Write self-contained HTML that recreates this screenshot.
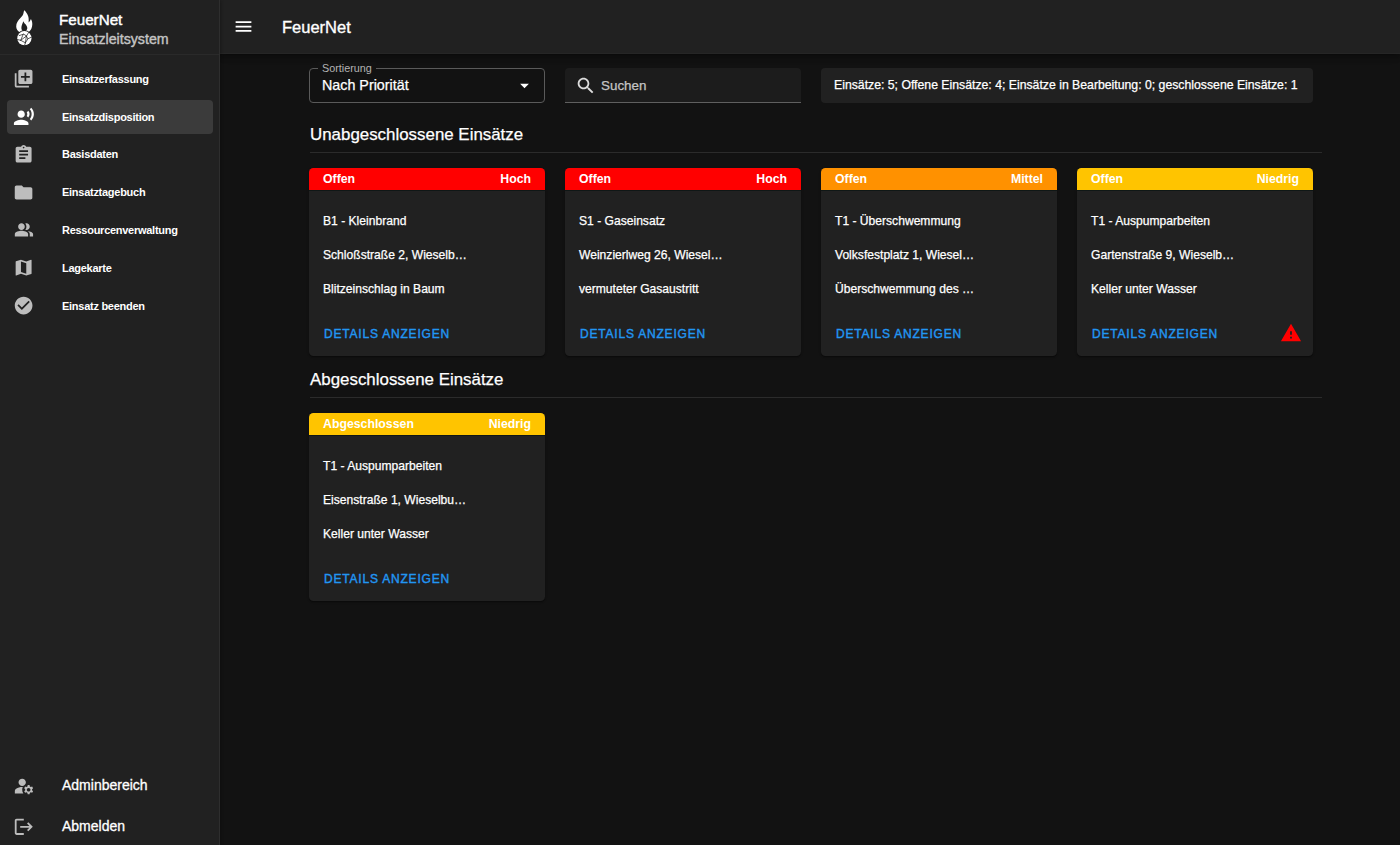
<!DOCTYPE html>
<html><head><meta charset="utf-8">
<style>
*{box-sizing:border-box;margin:0;padding:0}
html,body{width:1400px;height:845px;overflow:hidden;background:#121212;font-family:"Liberation Sans",sans-serif;color:#fff}
.abs{position:absolute}
#side{position:absolute;left:0;top:0;width:220px;height:845px;background:#212121;border-right:1px solid #2e2e2e;box-shadow:1px 0 3px rgba(0,0,0,.25);z-index:2}
#sidehead{position:absolute;left:0;top:0;width:219px;height:55px;border-bottom:1px solid #2a2a2a}
.brand1{position:absolute;left:59px;top:11px;font-size:15.2px;font-weight:400;-webkit-text-stroke:0.45px #fff;white-space:nowrap}
.brand2{position:absolute;left:59px;top:31px;font-size:14.2px;color:#c4c4c4;-webkit-text-stroke:0.4px #c4c4c4;white-space:nowrap}
.nav{position:absolute;left:7px;width:206px;height:34px;border-radius:4px}
.nav.sel{background:#3b3b3b}
.nav svg{position:absolute;left:6px;top:6px;width:22px;height:22px;fill:#bdbdbd}
.nav.sel svg{fill:#fff}
.nav span{position:absolute;left:55px;top:10.7px;font-size:11px;font-weight:700;letter-spacing:-0.27px;white-space:nowrap}
.nav.nav2 span{position:absolute;left:55px;font-size:14px;font-weight:400;letter-spacing:0;-webkit-text-stroke:0.3px #fff;white-space:nowrap}
#appbar{position:absolute;left:220px;top:0;width:1180px;height:54px;background:#212121;box-shadow:inset 0 -1px 0 #262626,0 2px 4px -1px rgba(0,0,0,.2),0 4px 5px 0 rgba(0,0,0,.14),0 1px 10px 0 rgba(0,0,0,.12)}
.title{position:absolute;left:62px;top:17.7px;font-size:16.5px;-webkit-text-stroke:0.35px #fff;white-space:nowrap}
.select{position:absolute;left:309px;top:68px;width:236px;height:34.5px;border:1px solid #5a5a5a;border-radius:4px}
.select .lbl{position:absolute;left:8px;top:-7px;padding:0 4px;background:#121212;font-size:10.8px;color:#b3b3b3;white-space:nowrap}
.select .val{position:absolute;left:12px;top:8.1px;font-size:14.3px;white-space:nowrap}
.search{position:absolute;left:565px;top:68px;width:236px;height:35px;background:#1c1c1c;border-radius:4px 4px 0 0;border-bottom:1px solid #5f5f5f}
.search .ph{position:absolute;left:36px;top:10px;font-size:13.4px;color:#c4c4c4;white-space:nowrap}
.stats{position:absolute;left:821px;top:68px;width:492px;height:34.5px;background:#212121;border-radius:4px}
.stats span{position:absolute;left:13px;top:10.3px;font-size:12.25px;white-space:nowrap}
.h{position:absolute;left:310px;font-size:16.9px;white-space:nowrap}
.div{position:absolute;left:310px;width:1012px;height:1px;background:#2b2b2b}
.card{position:absolute;width:236px;height:188px;background:#212121;border-radius:4.5px;overflow:hidden;box-shadow:0 2px 1px -1px rgba(0,0,0,.2),0 1px 1px 0 rgba(0,0,0,.14),0 1px 3px 0 rgba(0,0,0,.12)}
.card .hd{position:absolute;left:0;top:0;width:236px;height:23px;border-bottom:1px solid #0f1716}
.card .hd b{position:absolute;top:4px;font-size:12.3px;font-weight:700;white-space:nowrap}
.card .hd b.l{left:14px}
.card .hd b.r{right:14px}
.card .t{position:absolute;left:14px;font-size:12.1px;white-space:nowrap}
.card .btn{position:absolute;left:15px;top:159px;font-size:12px;font-weight:400;-webkit-text-stroke:0.4px #2196f3;letter-spacing:0.8px;color:#2196f3;white-space:nowrap}
.red{background:#ff0000}.orange{background:#ff9100}.yellow{background:#ffc400}
.th{-webkit-text-stroke:0.25px currentColor}
</style></head><body>
<div id="side">
  <div id="sidehead">
    <svg class="abs" style="left:10px;top:6px;width:30px;height:42px" viewBox="0 0 30 42">
<path fill="#fff" fill-rule="evenodd" d="M14.36 4.37C15.2 5.2 17.2 7.4 18.1 10C18.7 11.8 18.8 13.6 18.6 16.6C19.6 15.4 20.4 14.2 20.9 12.9C21.9 14.3 22.4 16.4 22.3 18.6C22.2 21.8 21 24.6 18.2 26.6L10.6 26.6C7.6 25.2 6.2 23 6.2 20.4C6.2 17 8 14.4 10.2 12.2C12.2 10.2 13.4 8.6 13.6 6.4C13.7 5.6 14 4.8 14.36 4.37ZM13.47 15.3C12.8 17 11.4 19.2 11.4 21.8C11.4 23.2 11.8 24.2 12.6 24.9L15.8 24.9C16.8 24.3 17.3 23.2 17.3 22.1C17.3 20.2 15.8 18.6 14.65 17.6C14.2 16.9 13.8 16 13.47 15.3Z"/>
<circle cx="14.4" cy="32.2" r="8" fill="#212121"/>
<circle cx="14.4" cy="32.2" r="7.1" fill="#fff"/>
<g stroke="#262626" stroke-width="0.75" fill="none" stroke-linejoin="round" stroke-linecap="round">
<path d="M13.2 28.3L10.7 34.3L15.4 36.8L17.9 32.8L16.4 30.1ZM16.4 30.1L15.4 36.8M10.7 34.3L16.4 30.1M13.2 28.3L9.2 29.6M17.9 32.8L21.3 31.2M15.4 36.8L14.6 39.3M10.7 34.3L7.6 33.6M16.4 30.1L18.6 26.6"/>
</g>
</svg>
    <div class="brand1">FeuerNet</div>
    <div class="brand2">Einsatzleitsystem</div>
  </div>
  <div class="nav" style="top:62px"><span style="top:10.70px">Einsatzerfassung</span></div>
  <div class="nav sel" style="top:100px"><span style="top:10.53px">Einsatzdisposition</span></div>
  <div class="nav" style="top:138px"><span style="top:10.36px">Basisdaten</span></div>
  <div class="nav" style="top:176px"><span style="top:10.19px">Einsatztagebuch</span></div>
  <div class="nav" style="top:214px"><span style="top:10.02px">Ressourcenverwaltung</span></div>
  <div class="nav" style="top:252px"><span style="top:9.85px">Lagekarte</span></div>
  <div class="nav" style="top:290px"><span style="top:9.68px">Einsatz beenden</span></div>
  <svg class="abs" style="left:13.38px;top:68.48px;width:21.24px;height:21.24px" viewBox="0 0 24 24" fill="#bdbdbd"><path d="M4 6H2v14c0 1.1.9 2 2 2h14v-2H4V6zm16-4H8c-1.1 0-2 .9-2 2v12c0 1.1.9 2 2 2h12c1.1 0 2-.9 2-2V4c0-1.1-.9-2-2-2zm-1 9h-4v4h-2v-4H9V9h4V5h2v4h4v2z"/></svg>
  <svg class="abs" style="left:13.08px;top:105.88px;width:21.84px;height:21.84px" viewBox="0 0 24 24" fill="#fff"><path d="M9 13c2.21 0 4-1.79 4-4s-1.79-4-4-4-4 1.79-4 4 1.79 4 4 4zm0 2c-2.67 0-8 1.34-8 4v2h16v-2c0-2.66-5.33-4-8-4zm7.76-9.64l-1.68 1.69c.84 1.18.84 2.71 0 3.89l1.68 1.69c2.02-2.02 2.02-5.07 0-7.27zM20.07 2l-1.63 1.63c2.77 3.02 2.77 7.56 0 10.74L20.07 16c3.9-3.89 3.91-9.95 0-14z"/></svg>
  <svg class="abs" style="left:13.38px;top:143.98px;width:21.24px;height:21.24px" viewBox="0 0 24 24" fill="#bdbdbd"><path d="M19 3h-4.18C14.4 1.84 13.3 1 12 1c-1.3 0-2.4.84-2.82 2H5c-1.1 0-2 .9-2 2v14c0 1.1.9 2 2 2h14c1.1 0 2-.9 2-2V5c0-1.1-.9-2-2-2zm-7 0c.55 0 1 .45 1 1s-.45 1-1 1-1-.45-1-1 .45-1 1-1zm2 14H7v-2h7v2zm3-4H7v-2h10v2zm0-4H7V7h10v2z"/></svg>
  <svg class="abs" style="left:13.44px;top:181.74px;width:21.12px;height:21.12px" viewBox="0 0 24 24" fill="#bdbdbd"><path d="M10 4H4c-1.1 0-1.99.9-1.99 2L2 18c0 1.1.9 2 2 2h16c1.1 0 2-.9 2-2V8c0-1.1-.9-2-2-2h-8l-2-2z"/></svg>
  <svg class="abs" style="left:14.04px;top:220.14px;width:19.92px;height:19.92px" viewBox="0 0 24 24" fill="#bdbdbd"><path d="M16.67 13.13C18.04 14.06 19 15.32 19 17v3h4v-3c0-2.18-3.57-3.47-6.33-3.87zM15 12c2.21 0 4-1.79 4-4s-1.79-4-4-4c-.47 0-.91.1-1.33.24C14.5 5.27 15 6.58 15 8s-.5 2.73-1.33 3.76c.42.14.86.24 1.33.24zM9 12c2.21 0 4-1.79 4-4s-1.79-4-4-4-4 1.79-4 4 1.79 4 4 4zM9 13c-2.67 0-8 1.34-8 4v3h16v-3c0-2.66-5.33-4-8-4z"/></svg>
  <svg class="abs" style="left:13.38px;top:257.28px;width:21.24px;height:21.24px" viewBox="0 0 24 24" fill="#bdbdbd"><path d="M20.5 3l-.16.03L15 5.1 9 3 3.36 4.9c-.21.07-.36.25-.36.48V20.5c0 .28.22.5.5.5l.16-.03L9 18.9l6 2.1 5.64-1.9c.21-.07.36-.25.36-.48V3.5c0-.28-.22-.5-.5-.5zM15 19l-6-2.11V5l6 2.11V19z"/></svg>
  <svg class="abs" style="left:13.38px;top:295.18px;width:21.24px;height:21.24px" viewBox="0 0 24 24" fill="#bdbdbd"><path d="M12 2C6.48 2 2 6.48 2 12s4.48 10 10 10 10-4.48 10-10S17.52 2 12 2zm-2 15l-5-5 1.41-1.41L10 14.17l7.59-7.59L19 8l-9 9z"/></svg>
  <div class="nav nav2" style="top:768px"><span style="top:9px">Adminbereich</span></div>
  <div class="nav nav2" style="top:809px"><span style="top:9px">Abmelden</span></div>
  <svg class="abs" style="left:13.3px;top:775.2px;width:22.08px;height:22.08px" viewBox="0 0 24 24" fill="#bdbdbd"><path d="M10.67 13.02c-.22-.01-.44-.02-.67-.02-2.42 0-4.68.67-6.61 1.82-.88.52-1.39 1.5-1.39 2.53V20h9.26c-.79-1.13-1.26-2.51-1.26-4 0-1.07.25-2.07.67-2.98zM10 12c2.21 0 4-1.79 4-4s-1.79-4-4-4-4 1.79-4 4 1.79 4 4 4zm10.75 4c0-.22-.03-.42-.06-.63l1.14-1.01-1-1.73-1.45.49c-.32-.27-.68-.48-1.08-.63L18 11h-2l-.3 1.49c-.4.15-.76.36-1.08.63l-1.45-.49-1 1.73 1.14 1.01c-.03.21-.06.41-.06.63s.03.42.06.63l-1.14 1.01 1 1.73 1.45-.49c.32.27.68.48 1.08.63L16 21h2l.3-1.49c.4-.15.76-.36 1.08-.63l1.45.49 1-1.73-1.14-1.01c.03-.21.06-.41.06-.63zM17 18c-1.1 0-2-.9-2-2s.9-2 2-2 2 .9 2 2-.9 2-2 2z"/></svg>
  <svg class="abs" style="left:13.26px;top:816.0px;width:21.6px;height:21.6px" viewBox="0 0 24 24" fill="#bdbdbd"><path d="M17 7l-1.41 1.41L18.17 11H8v2h10.17l-2.58 2.58L17 17l5-5zM4 5h8V3H4c-1.1 0-2 .9-2 2v14c0 1.1.9 2 2 2h8v-2H4V5z"/></svg>
</div>
<div id="appbar">
  <svg class="abs" style="left:13px;top:16.3px;width:21px;height:21px" viewBox="0 0 24 24" fill="#fff"><path d="M3 18h18v-2H3v2zm0-5h18v-2H3v2zm0-7v2h18V6H3z"/></svg>
  <div class="title">FeuerNet</div>
</div>

<div class="select"><div class="lbl">Sortierung</div><div class="val th">Nach Priorität</div>
  <svg class="abs" style="left:203.5px;top:6px;width:21px;height:21px" viewBox="0 0 24 24" fill="#fff"><path d="M7 10l5 5 5-5z"/></svg></div>
<div class="search"><svg class="abs" style="left:9.6px;top:6.9px;width:21.5px;height:21.5px" viewBox="0 0 24 24" fill="#ddd"><path d="M15.5 14h-.79l-.28-.27C15.41 12.59 16 11.11 16 9.5 16 5.91 13.09 3 9.5 3S3 5.91 3 9.5 5.91 16 9.5 16c1.61 0 3.09-.59 4.23-1.57l.27.28v.79l5 4.99L20.49 19l-4.99-5zm-6 0C7.01 14 5 11.99 5 9.5S7.01 5 9.5 5 14 7.01 14 9.5 11.99 14 9.5 14z"/></svg><div class="ph th">Suchen</div></div>
<div class="stats"><span class="th">Einsätze: 5; Offene Einsätze: 4; Einsätze in Bearbeitung: 0; geschlossene Einsätze: 1</span></div>

<div class="h th" style="top:125px">Unabgeschlossene Einsätze</div>
<div class="div" style="top:152px"></div>

<div class="card" style="left:309px;top:168px"><div class="hd red"><b class="l">Offen</b><b class="r">Hoch</b></div>
  <div class="t th" style="top:45.7px">B1 - Kleinbrand</div><div class="t th" style="top:79.7px">Schloßstraße 2, Wieselb…</div><div class="t th" style="top:113.7px">Blitzeinschlag in Baum</div><div class="btn">DETAILS ANZEIGEN</div></div>
<div class="card" style="left:565px;top:168px"><div class="hd red"><b class="l">Offen</b><b class="r">Hoch</b></div>
  <div class="t th" style="top:45.7px">S1 - Gaseinsatz</div><div class="t th" style="top:79.7px">Weinzierlweg 26, Wiesel…</div><div class="t th" style="top:113.7px">vermuteter Gasaustritt</div><div class="btn">DETAILS ANZEIGEN</div></div>
<div class="card" style="left:821px;top:168px"><div class="hd orange"><b class="l">Offen</b><b class="r">Mittel</b></div>
  <div class="t th" style="top:45.7px">T1 - Überschwemmung</div><div class="t th" style="top:79.7px">Volksfestplatz 1, Wiesel…</div><div class="t th" style="top:113.7px">Überschwemmung des …</div><div class="btn">DETAILS ANZEIGEN</div></div>
<div class="card" style="left:1077px;top:168px"><div class="hd yellow"><b class="l">Offen</b><b class="r">Niedrig</b></div>
  <div class="t th" style="top:45.7px">T1 - Auspumparbeiten</div><div class="t th" style="top:79.7px">Gartenstraße 9, Wieselb…</div><div class="t th" style="top:113.7px">Keller unter Wasser</div><div class="btn">DETAILS ANZEIGEN</div>
  <svg class="abs" style="left:203px;top:154px;width:22px;height:22px" viewBox="0 0 24 24" fill="#ff0000"><path d="M1 21h22L12 2 1 21zm12-3h-2v-2h2v2zm0-4h-2v-4h2v4z"/></svg></div>

<div class="h th" style="top:370px">Abgeschlossene Einsätze</div>
<div class="div" style="top:397px"></div>
<div class="card" style="left:309px;top:413px"><div class="hd yellow"><b class="l">Abgeschlossen</b><b class="r">Niedrig</b></div>
  <div class="t th" style="top:45.7px">T1 - Auspumparbeiten</div><div class="t th" style="top:79.7px">Eisenstraße 1, Wieselbu…</div><div class="t th" style="top:113.7px">Keller unter Wasser</div><div class="btn">DETAILS ANZEIGEN</div></div>
</body></html>
